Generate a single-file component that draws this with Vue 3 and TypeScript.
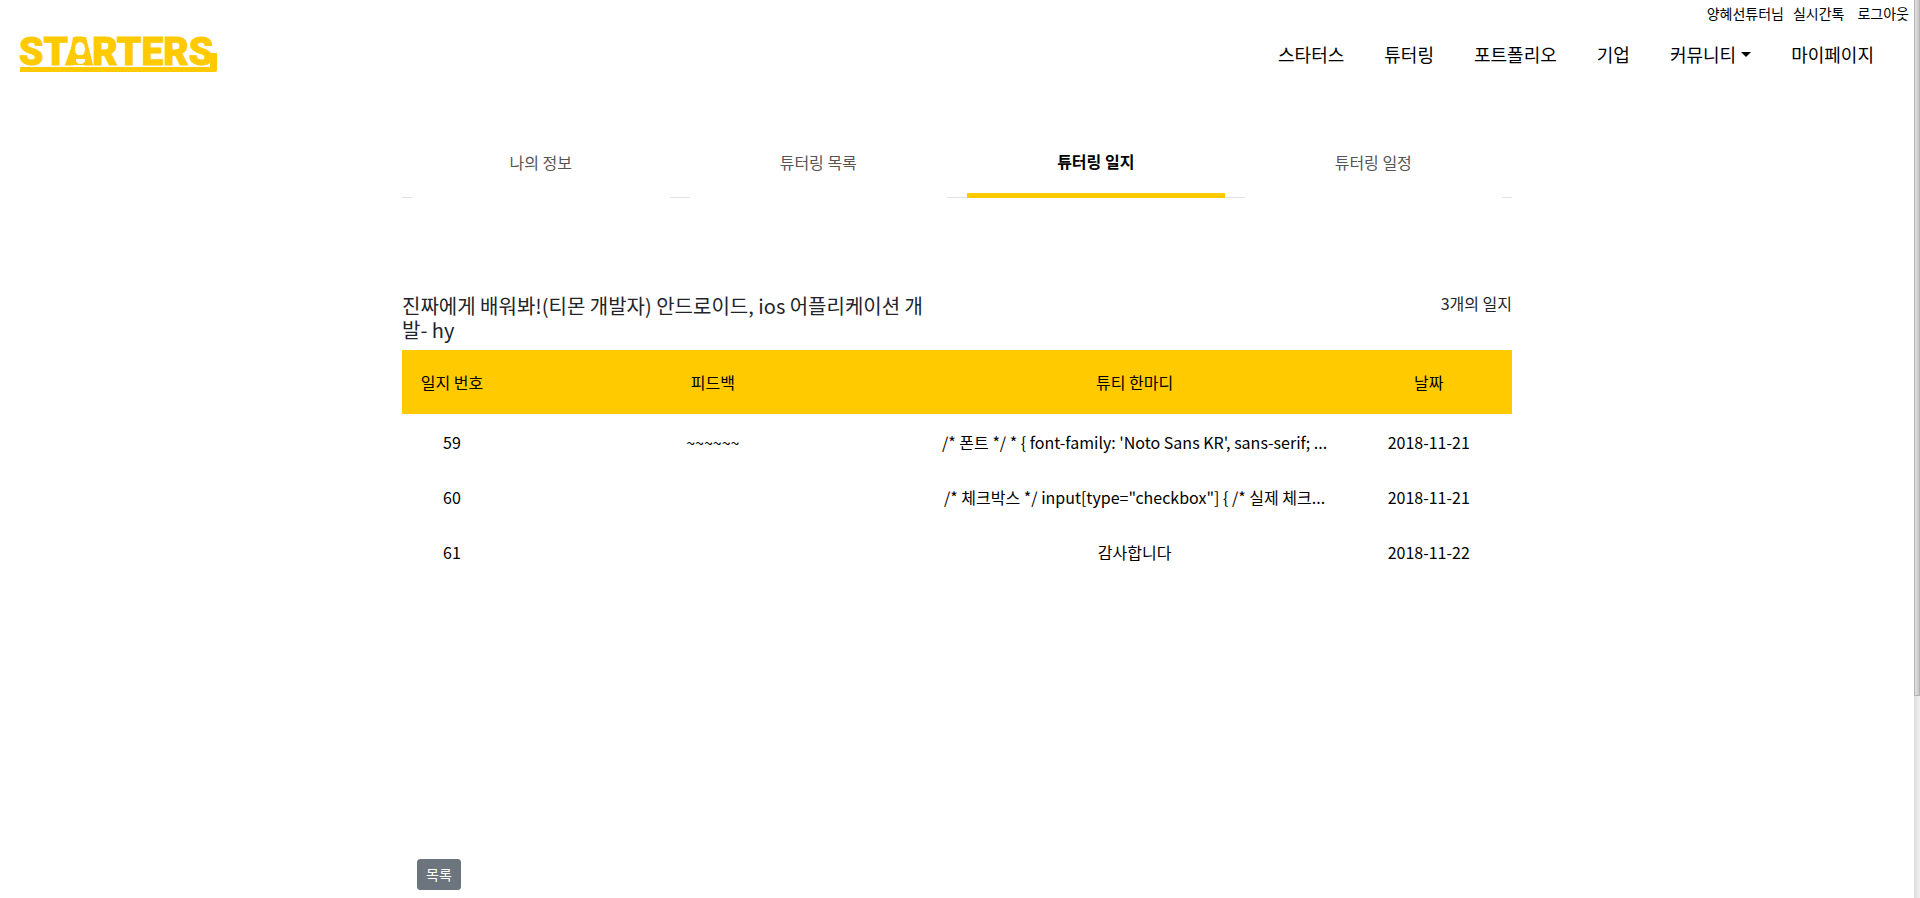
<script setup lang="ts">
interface MenuItem {
  label: string
  dropdown?: boolean
}

interface Journal {
  id: number
  feedback: string
  comment: string
  date: string
}

const menu: MenuItem[] = [
  { label: '스타터스' },
  { label: '튜터링' },
  { label: '포트폴리오' },
  { label: '기업' },
  { label: '커뮤니티', dropdown: true },
  { label: '마이페이지' },
]

const tabs: string[] = ['나의 정보', '튜터링 목록', '튜터링 일지', '튜터링 일정']
const activeTab = '튜터링 일지'

const journals: Journal[] = [
  {
    id: 59,
    feedback: '~~~~~~',
    comment: "/* 폰트 */ * { font-family: 'Noto Sans KR', sans-serif; ...",
    date: '2018-11-21',
  },
  {
    id: 60,
    feedback: '',
    comment: '/* 체크박스 */ input[type="checkbox"] { /* 실제 체크...',
    date: '2018-11-21',
  },
  { id: 61, feedback: '', comment: '감사합니다', date: '2018-11-22' },
]
</script>

<template>
  <div class="page">
    <div class="content">
      <header class="header">
        <a class="logo" href="#" aria-label="STARTERS">
          <svg width="208" height="52" viewBox="-4 -12 208 52">
            <text class="wordmark" x="-1" y="28">STARTERS</text>
            <path class="gold" d="M53 0H66L73 28H48Z" />
            <ellipse class="cut" cx="60" cy="12" rx="5" ry="7" />
            <path class="gold" d="M53 18H67V22H53Z" />
            <path class="cut" d="M56 22H65V24Q64 27 60 27Q57 27 56 24Z" />
            <path class="gold" d="M0 30H190V16H197V33Q197 35 195 35H0Z" />
          </svg>
        </a>
        <div class="account">
          <a class="user" href="#">양혜선튜터님</a>
          <a class="chat" href="#">실시간톡</a>
          <a href="#">로그아웃</a>
        </div>
        <nav class="menu">
          <a v-for="item in menu" :key="item.label" href="#" :class="{ dropdown: item.dropdown }">{{ item.label }}</a>
        </nav>
      </header>

      <main class="container">
        <nav class="tabs">
          <a v-for="tab in tabs" :key="tab" href="#" :class="{ active: tab === activeTab }">{{ tab }}</a>
        </nav>

        <div class="heading">
          <h1>진짜에게 배워봐!(티몬 개발자) 안드로이드, ios 어플리케이션 개발- hy</h1>
          <span>{{ journals.length }}개의 일지</span>
        </div>

        <table>
          <colgroup>
            <col class="col-id" />
            <col class="col-wide" />
            <col class="col-wide" />
            <col class="col-date" />
          </colgroup>
          <thead>
            <tr>
              <th>일지 번호</th>
              <th>피드백</th>
              <th>튜티 한마디</th>
              <th>날짜</th>
            </tr>
          </thead>
          <tbody>
            <tr v-for="journal in journals" :key="journal.id">
              <td>{{ journal.id }}</td>
              <td>{{ journal.feedback }}</td>
              <td>{{ journal.comment }}</td>
              <td>{{ journal.date }}</td>
            </tr>
          </tbody>
        </table>

        <button class="list-button" type="button">목록</button>
      </main>
    </div>
    <div class="scroll-track"><div class="scroll-thumb"></div></div>
  </div>
</template>

<style>
body {
  margin: 0;
  background: #fff;
}
</style>

<style scoped>
* {
  box-sizing: border-box;
}

.page {
  display: flex;
  min-height: 100vh;
  font-family: 'Noto Sans CJK KR', 'Noto Sans', sans-serif;
  font-size: 16px;
  line-height: 24px;
  color: #212529;
}

.content {
  flex: 1;
  min-width: 0;
}

a {
  color: #000;
  text-decoration: none;
}

.header {
  display: grid;
  grid-template-columns: auto 1fr;
  grid-template-rows: 28px 56px;
  padding-left: 16px;
}

.logo {
  grid-row: 1 / 3;
  padding-top: 25px;
}

.logo svg {
  display: block;
}

.wordmark {
  font-family: Roboto, sans-serif;
  font-size: 39px;
  font-weight: 900;
  fill: #ffca00;
  stroke: #ffca00;
  stroke-width: 1px;
}

.gold {
  fill: #ffca00;
}

.cut {
  fill: #fff;
}

.account {
  display: flex;
  justify-content: flex-end;
  padding-right: 5px;
  font-size: 14px;
  line-height: 26px;
}

.user {
  margin-right: 9px;
}

.chat {
  margin-right: 13px;
}

.menu {
  display: flex;
  justify-content: flex-end;
  padding-right: 20px;
  font-size: 18px;
  line-height: 52px;
}

.menu a {
  padding: 0 20px;
}

.dropdown::after {
  content: '';
  display: inline-block;
  margin-left: 5px;
  vertical-align: 5px;
  border-top: 5px solid #000;
  border-right: 5px solid transparent;
  border-left: 5px solid transparent;
}

.container {
  max-width: 1110px;
  margin: 0 auto;
  padding-top: 48px;
}

.tabs {
  display: flex;
  border-bottom: 1px solid #dee2e6;
}

.tabs a {
  flex: 1;
  height: 66px;
  margin: 0 10px -1px;
  line-height: 60px;
  text-align: center;
  color: #555;
  background: #fff;
}

.tabs .active {
  border-bottom: 5px solid #ffca00;
  line-height: 58px;
  font-weight: 700;
  color: #000;
}

.heading {
  display: flex;
  justify-content: space-between;
  align-items: flex-start;
  margin-top: 96px;
}

h1 {
  width: 50%;
  margin: 0 0 8px;
  padding-right: 30px;
  font-size: 20px;
  font-weight: 400;
  line-height: 24px;
}

.heading span {
  line-height: 18px;
}

table {
  width: 100%;
  table-layout: fixed;
  border-collapse: collapse;
  color: #000;
  text-align: center;
}

.col-id {
  width: 9%;
}

.col-wide {
  width: 38%;
}

.col-date {
  width: 15%;
}

th {
  height: 64px;
  padding: 0;
  font-weight: 400;
  background: #ffca00;
}

td {
  height: 55px;
  padding: 0;
  white-space: nowrap;
  overflow: hidden;
}

.list-button {
  display: block;
  margin: 280px 0 8px 15px;
  padding: 4px 8px;
  border: 1px solid #6c757d;
  border-radius: 3px;
  font-family: inherit;
  font-size: 14px;
  line-height: 21px;
  color: #fff;
  background: #6c757d;
}

.scroll-track {
  width: 6px;
  background: linear-gradient(to right, #dcdcdc, #f1f1f1);
}

.scroll-thumb {
  height: 77.5%;
  border: 1px solid #b4b4b4;
  border-top: 0;
  background: linear-gradient(to right, #e0e0e0, #c8c8c8);
}
</style>
